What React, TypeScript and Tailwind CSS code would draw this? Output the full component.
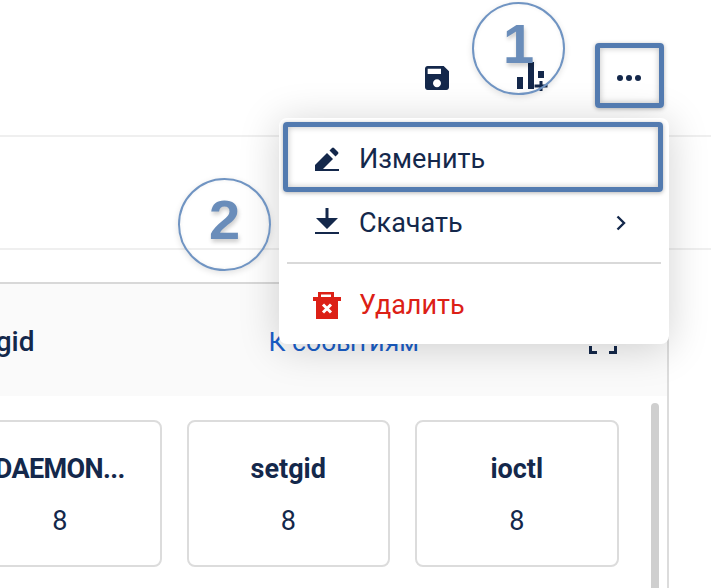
const ink = "text-[#14284b]";

function SaveIcon() {
  return (
    <svg viewBox="3 3 18 18" className="w-6 h-6 fill-current text-[#14284b]">
      <path d="M17 3H5c-1.11 0-2 .9-2 2v14c0 1.1.89 2 2 2h14c1.1 0 2-.9 2-2V7l-4-4zm-5 16c-1.66 0-3-1.34-3-3s1.34-3 3-3 3 1.34 3 3-1.34 3-3 3zm3-10H5V5h10v4z" />
    </svg>
  );
}

function ChartPlusIcon() {
  return (
    <svg viewBox="0 0 32 32" className="w-8 h-8 fill-current text-[#14284b]">
      <path d="M1 16h6v12H1zM12 1h6v27h-6zM22 10h6v7h-6zM23.500 20h3v3.500h5v3h-5V30h-3v-3.500h-5v-3h5z" />
    </svg>
  );
}

function PencilIcon() {
  return (
    <svg viewBox="0 0 24 24" className="w-6 h-6 fill-current text-[#14284b]">
      <path d="M0 24v-6L12 6l6 6L6 24z" />
      <path d="M0 22h24v2H0z" />
      <path d="M14.500 3.500l2.500-2.500q1-1 2 0l4 4q1 1 0 2l-2.500 2.500z" />
    </svg>
  );
}

function DownloadIcon() {
  return (
    <svg viewBox="0 0 24 26" className="w-6 h-[26px] -mt-[3px] fill-current text-[#14284b]">
      <path d="M10.500 0h3v10H23L12 21 1 10h9.500zM0 24h24v2H0z" />
    </svg>
  );
}

function TrashIcon() {
  return (
    <svg viewBox="0 0 28 27" className="w-7 h-[27px]">
      <path fill="#dc2016" d="M5 0h16v5h7v4h-3v18H3V9H0V5h5z" />
      <path fill="white" d="M8 2.500h10V5H8z" />
      <path stroke="white" strokeWidth="3" d="M10 12.500l8 8M18 12.500l-8 8" />
    </svg>
  );
}

function ChevronIcon() {
  return (
    <svg viewBox="0 0 10 16" className="w-2.5 h-4 fill-none stroke-[#14284b] stroke-[2.4]">
      <path d="M1.500 1.500L8 8l-6.500 6.500" />
    </svg>
  );
}

function StatCard({ title, value, titleClass }: { title: string; value: string; titleClass?: string }) {
  return (
    <div className="h-[147px] w-[203.5px] shrink-0 rounded-lg border-2 border-[#dcdcdc] bg-white flex flex-col items-center pt-[29px]">
      <p className={`text-[27px] leading-[36px] font-bold whitespace-nowrap ${ink} ${titleClass ?? ""}`}>{title}</p>
      <p className={`text-[27px] leading-[36px] mt-[16px] ${ink}`}>{value}</p>
    </div>
  );
}

function Marker({ n, className }: { n: string; className: string }) {
  return (
    <div className={`absolute w-[93px] h-[93px] rounded-full border-2 border-[#7094c2] flex items-center justify-center pb-[9px] shadow-[0_2px_6px_rgba(0,0,0,0.12),inset_0_0_4px_rgba(0,0,0,0.06)] ${className}`}>
      <span className="font-['Liberation_Sans'] font-bold text-[56px] leading-none text-[#6a8dba] [text-shadow:1px_3px_4px_rgba(0,0,0,0.2)]">{n}</span>
    </div>
  );
}

export default function App() {
  return (
    <div className="relative w-[711px] h-[588px] overflow-hidden bg-white font-['Roboto',sans-serif]">
      {/* Toolbar */}
      <div className="h-[135px] flex justify-end items-start pt-[62px] pr-[70px]">
        <div className="mt-1"><SaveIcon /></div>
        <div className="ml-[67px] -mt-px"><ChartPlusIcon /></div>
        <div className="flex gap-[3px] mt-[13px] ml-[69px] w-[24px]">
          <span className="w-[6px] h-[6px] rounded-full bg-[#14284b]" />
          <span className="w-[6px] h-[6px] rounded-full bg-[#14284b]" />
          <span className="w-[6px] h-[6px] rounded-full bg-[#14284b]" />
        </div>
      </div>

      <div className="h-[113px] border-t-2 border-[#efefef]" />
      <div className="h-[34px] border-t-2 border-[#efefef]" />

      {/* Panel */}
      <div className="w-[669px] h-[306px] border-t-2 border-r-2 border-t-[#d8d8d8] border-r-[#dcdcdc] overflow-hidden relative">
        <div className="h-[112px] bg-[#fafafa] flex items-center justify-between pr-[50px]">
          <span className={`-ml-[43px] mt-[4px] text-[28px] font-medium ${ink}`}>setgid</span>
          <div className="flex items-center gap-[170px]">
            <span className="mt-[3px] text-[26.6px] text-[#1a5fc9]">К событиям</span>
            <svg viewBox="0 0 28 28" className="w-7 h-7 fill-none stroke-[#14284b] stroke-[3]">
              <path d="M1.500 8V1.500H8M20 1.500h6.500V8M1.500 20v6.500H8M20 26.500h6.500V20" />
            </svg>
          </div>
        </div>
        <div className="flex gap-[25px] -ml-[42px] pt-[24px]">
          <StatCard title="DAEMON..." value="8" titleClass="tracking-[-0.6px]" />
          <StatCard title="setgid" value="8" />
          <StatCard title="ioctl" value="8" />
        </div>
        <div className="absolute left-[651px] top-[119px] w-2 h-[200px] rounded bg-[#cfcfcf]" />
      </div>

      {/* Dropdown menu */}
      <div className="absolute left-[279px] top-[118px] w-[390px] h-[226px] rounded-lg bg-white shadow-[0_4px_40px_rgba(0,0,0,0.18)] flex flex-col">
        <div className="h-[73px] pt-[8px] pl-[36px] flex items-center gap-[20px]">
          <PencilIcon />
          <span className={`mt-[2px] text-[27px] ${ink}`}>Изменить</span>
        </div>
        <div className="h-[61px] pt-[2px] pl-[36px] pr-[43px] flex items-center gap-[20px]">
          <DownloadIcon />
          <span className={`mt-[1px] text-[27px] flex-1 ${ink}`}>Скачать</span>
          <ChevronIcon />
        </div>
        <div className="mx-2 mt-[10px] h-0.5 bg-[#d9d9d9]" />
        <div className="flex-1 pl-[34px] flex items-center gap-[18px] pt-[2px]">
          <TrashIcon />
          <span className="text-[27px] text-[#dc2016]">Удалить</span>
        </div>
      </div>

      {/* Annotations */}
      <div className="absolute left-[595px] top-[43px] w-[69px] h-[65px] rounded border-[5px] border-[#537bb0] shadow-[0_1px_4px_rgba(0,0,0,0.3),inset_0_0_6px_rgba(0,0,0,0.25)]" />
      <div className="absolute left-[283px] top-[122px] w-[380px] h-[70px] rounded border-[5px] border-[#537bb0] shadow-[0_1px_4px_rgba(0,0,0,0.3),inset_0_0_6px_rgba(0,0,0,0.25)]" />
      <Marker n="1" className="left-[472px] top-[2px]" />
      <Marker n="2" className="left-[178px] top-[178px]" />
    </div>
  );
}
